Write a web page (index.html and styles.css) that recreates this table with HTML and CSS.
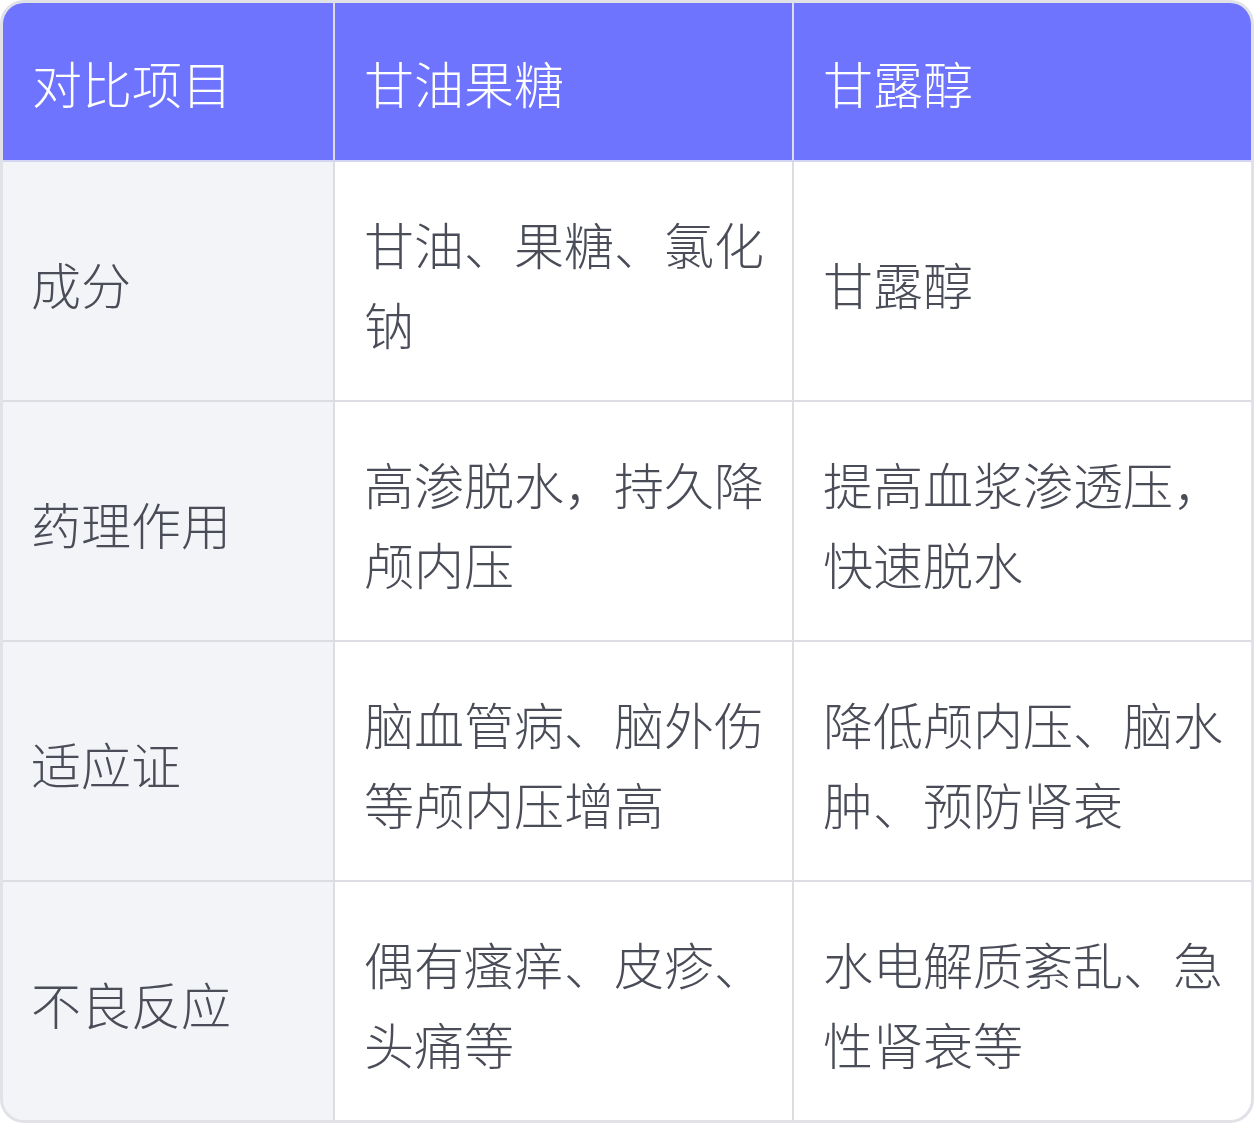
FILE: index.html
```html
<!DOCTYPE html>
<html lang="zh">
<head>
<meta charset="utf-8">
<link rel="stylesheet" href="styles.css">
</head>
<body>
<div class="table">
  <div class="row head">
    <div class="cell">对比项目</div>
    <div class="cell">甘油果糖</div>
    <div class="cell">甘露醇</div>
  </div>
  <div class="row">
    <div class="cell label">成分</div>
    <div class="cell">甘油、果糖、氯化钠</div>
    <div class="cell">甘露醇</div>
  </div>
  <div class="row">
    <div class="cell label">药理作用</div>
    <div class="cell">高渗脱水，持久降颅内压</div>
    <div class="cell">提高血浆渗透压，快速脱水</div>
  </div>
  <div class="row">
    <div class="cell label">适应证</div>
    <div class="cell">脑血管病、脑外伤等颅内压增高</div>
    <div class="cell">降低颅内压、脑水肿、预防肾衰</div>
  </div>
  <div class="row last">
    <div class="cell label">不良反应</div>
    <div class="cell">偶有瘙痒、皮疹、头痛等</div>
    <div class="cell">水电解质紊乱、急性肾衰等</div>
  </div>
</div>
</body>
</html>
```

FILE: styles.css
```css
html, body {
  margin: 0;
  padding: 0;
  background: #ffffff;
}
.table {
  width: 1254px;
  height: 1123px;
  box-sizing: border-box;
  border: 3px solid #e1e2e7;
  border-radius: 24px;
  overflow: hidden;
  font-family: "Noto Sans CJK SC", "Noto Sans", sans-serif;
  font-size: 50px;
  font-weight: 300;
  line-height: 80px;
  color: #4a4d58;
  display: flex;
  flex-direction: column;
}
.row {
  display: grid;
  grid-template-columns: 330px 1fr 1fr;
  column-gap: 2px;
  background: #dcdde2;
  border-bottom: 2px solid #dcdde2;
  height: 238px;
  flex: none;
}
.row.last {
  border-bottom: none;
  flex: 1;
}
.row.head {
  height: 157px;
  border-bottom: 2px solid #d3d5f3;
}
.cell {
  background: #ffffff;
  padding: 3px 24px 0 29px;
  display: flex;
  align-items: center;
}
.cell.label {
  background: #f3f4f8;
  padding-left: 28px;
}
.head .cell {
  background: #6e74fe;
  color: #ffffff;
  padding-top: 0;
}
```
